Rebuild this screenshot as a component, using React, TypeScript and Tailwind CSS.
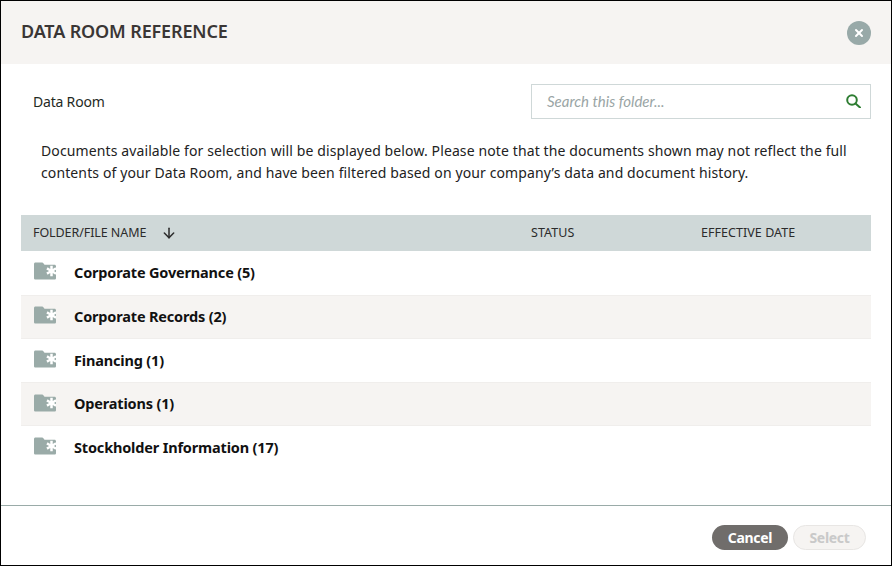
import React from "react"
import { ArrowDown, X } from "lucide-react"

const folders = [
	"Corporate Governance (5)",
	"Corporate Records (2)",
	"Financing (1)",
	"Operations (1)",
	"Stockholder Information (17)",
]

const FolderIcon = () => (
	<svg width="22" height="18" viewBox="0 0 23 18" className="-mt-[3px] shrink-0">
		<path
			d="M0 1.500C0 .7 .7 0 1.500 0h7c.6 0 1 .3 1.300.8L11 2.500h10.500c.8 0 1.500.7 1.500 1.500v12.500c0 .8-.7 1.500-1.500 1.500h-20C.7 18 0 17.300 0 16.500z"
			fill="#9aaba8"
		/>
		<path
			d="M17 3.500h2.600v3.300l2.800-1.600 1.300 2.200-2.900 1.600 2.900 1.600-1.300 2.200-2.800-1.600v3.300H17v-3.300l-2.800 1.600-1.300-2.200 2.900-1.600-2.900-1.600 1.300-2.200 2.800 1.600z"
			fill="#ffffff"
		/>
	</svg>
)

const SearchIcon = () => (
	<svg width="15" height="14" viewBox="0 0 15 14" fill="none" stroke="#2e7d32" strokeWidth="2" className="-mt-[2px]">
		<circle cx="6" cy="6" r="4.800" />
		<path d="M9.500 9.500 14 13.500" strokeLinecap="round" />
	</svg>
)

export default function App() {
	return (
		<div className="box-border flex h-[566px] w-[892px] flex-col border border-black bg-white font-['Noto_Sans',sans-serif] text-[#222]">
			<div className="flex h-[63px] shrink-0 items-center justify-between bg-[#f6f4f2] pl-5 pr-[12px]">
				<h1 className="-mt-[2px] text-[18px] font-semibold tracking-[-0.15px] text-[#3a3635]">
					DATA ROOM REFERENCE
				</h1>
				<button className="mr-2 flex h-6 w-6 items-center justify-center rounded-full bg-[#98a9a8] text-white">
					<X size={12} strokeWidth={4} />
				</button>
			</div>

			<div className="flex flex-1 flex-col px-5">
				<div className="mt-5 flex items-center justify-between pl-3">
					<span className="text-[14px] tracking-[-0.2px] text-[#1f2a24]">Data Room</span>
					<div className="flex h-[35px] w-[340px] items-center justify-between border border-[#cfd8d8] pl-[15px] pr-[9px]">
						<span className="font-['Lato',sans-serif] text-[15px] italic text-[#9aa5a5]">
							Search this folder...
						</span>
						<SearchIcon />
					</div>
				</div>

				<p className="mt-[21px] whitespace-nowrap pl-5 text-[14px] leading-[22px] tracking-[0.115px] text-[#222]">
					Documents available for selection will be displayed below. Please note that the documents shown may not reflect the full
					<br />
					contents of your Data Room, and have been filtered based on your company’s data and document history.
				</p>

				<div className="mt-[31px] flex h-9 items-center bg-[#cfd8d8] text-[12.5px] tracking-[0.05px] text-[#2b2b2b]">
					<div className="flex w-[510px] items-center pl-3">
						<span className="tracking-[-0.08px]">FOLDER/FILE NAME</span>
						<ArrowDown size={16} strokeWidth={2.25} className="ml-[15px]" />
					</div>
					<div className="w-[170px]">STATUS</div>
					<div>EFFECTIVE DATE</div>
				</div>

				{folders.map((name, i) => (
					<div
						key={name}
						className={`flex h-[43.75px] items-center gap-[18px] pl-[13px] ${i % 2 ? "border-y border-[#f0eeec] bg-[#f6f4f2]" : ""}`}
					>
						<FolderIcon />
						<span className="text-[14.5px] font-bold tracking-[-0.17px] text-[#111]">{name}</span>
					</div>
				))}
			</div>

			<div className="flex h-[60px] shrink-0 items-center justify-end gap-[5px] border-t border-[#9aaba8] pr-[25px] pt-[4px]">
				<button className="h-[25px] w-[76px] rounded-full bg-[#706d6b] text-[14px] font-bold tracking-[-0.3px] text-white">
					Cancel
				</button>
				<button className="h-[25px] w-[73px] rounded-full border border-[#e8e6e4] bg-[#f6f4f2] text-[14px] font-bold tracking-[-0.3px] text-[#c9c9c9]">
					Select
				</button>
			</div>
		</div>
	)
}
